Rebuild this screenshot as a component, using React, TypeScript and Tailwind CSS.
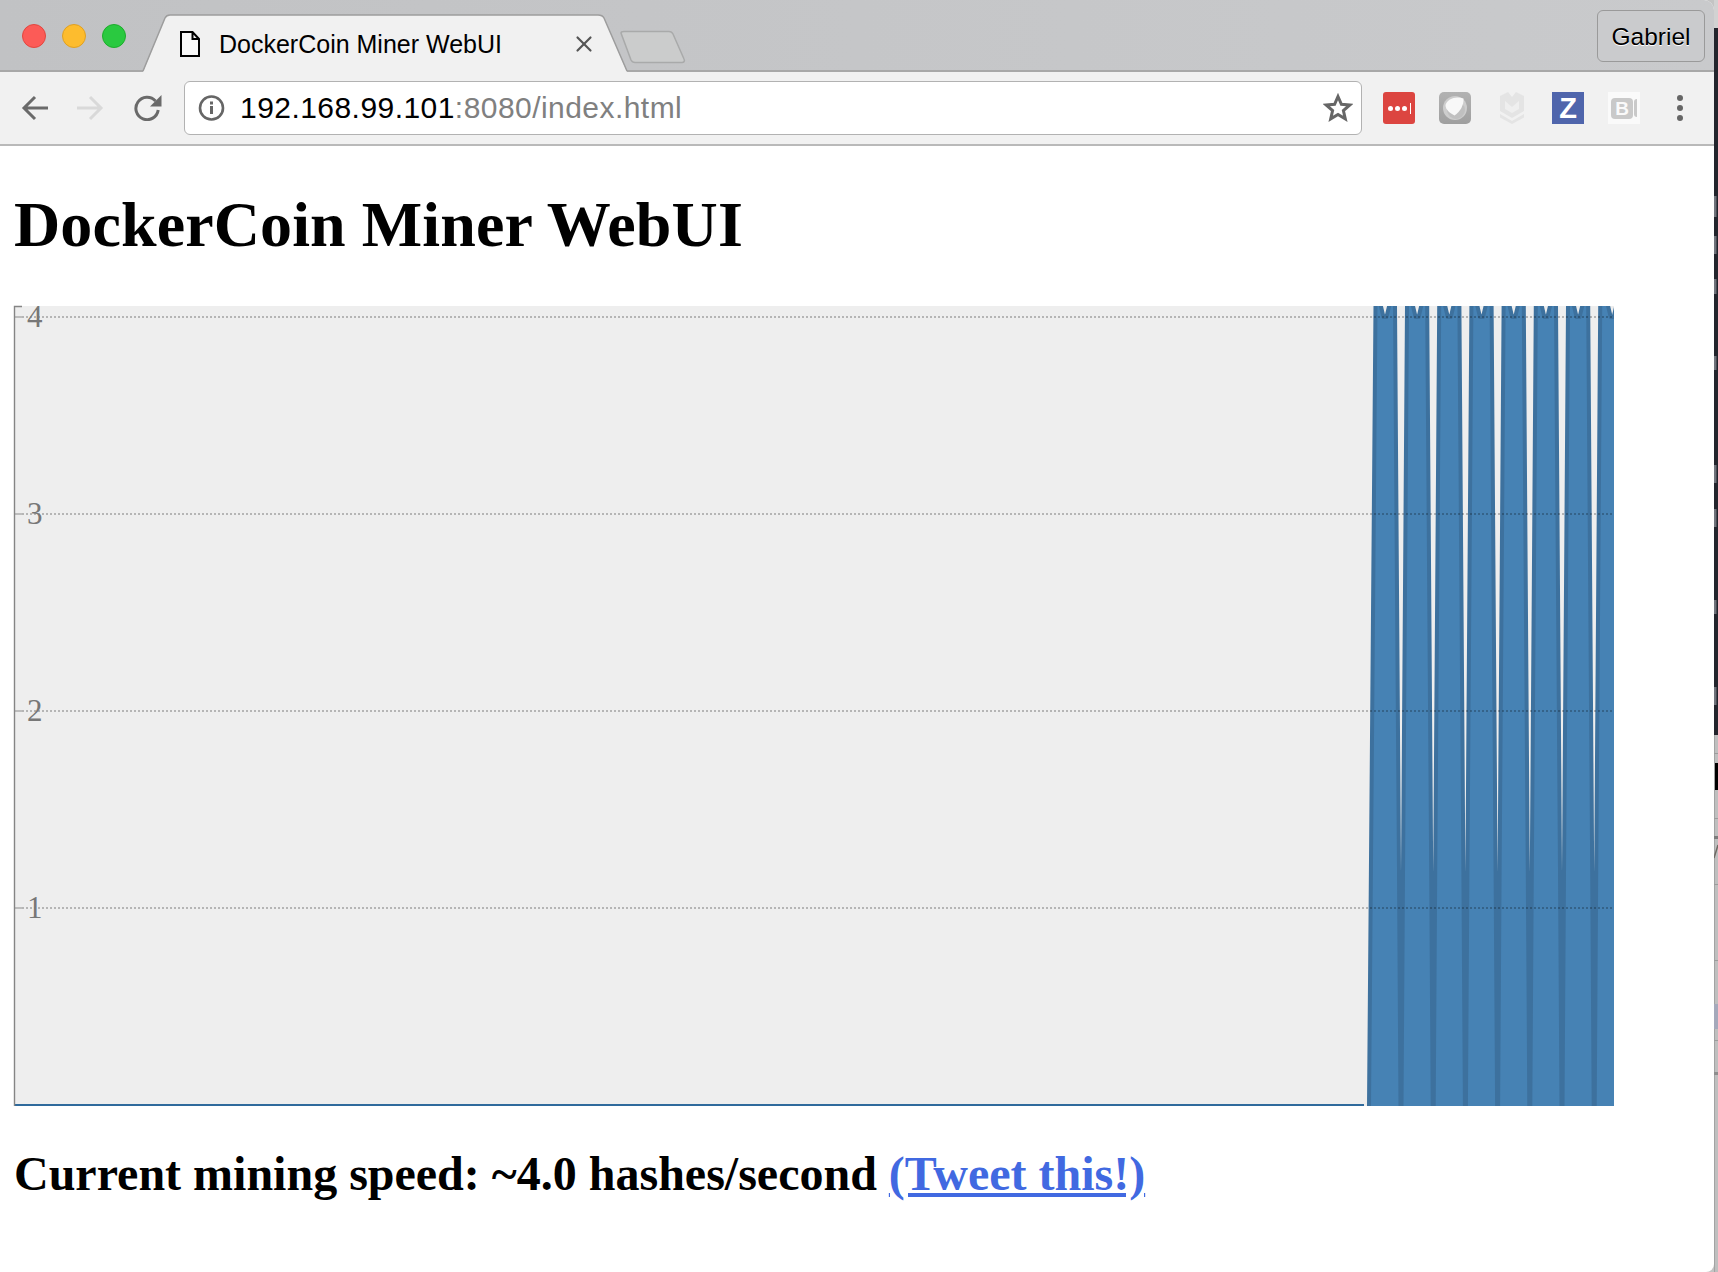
import React from 'react';
import { X } from 'lucide-react';

const SERIF = "font-['Liberation_Serif',serif]";

// valleys between the bursts, the chart is a rickshaw area clipped to its box
const VALLEYS = [0, 1, 2, 3, 4, 5, 6].map((i) => 1401 + 32.2 * i);

function areaPath() {
  const first = 1369;
  let d = `M${first} 1106 L${first + 6.5} 306 L${first + 6.6} 292`;
  const starts = [first, ...VALLEYS];
  starts.forEach((v, i) => {
    const c = v === first ? 1385 : i === VALLEYS.length ? v + 18 : v + 16.1;
    d += ` L${c - 6.5} 292 L${c - 6.5} 296 L${c - 1.5} 317 L${c + 1.5} 317 L${c + 6.5} 296 L${c + 6.5} 292`;
    if (i < VALLEYS.length) {
      const next = VALLEYS[i];
      d += ` L${next - 6} 292 L${next - 6} 306 L${next - 2} 872 L${next - 0.5} 1106 L${next + 0.5} 1106 L${next + 2} 872 L${next + 6} 306 L${next + 6} 292`;
    }
  });
  return d + ' L1640 292 L1640 1106';
}

function Chart() {
  const ticks = [
    { label: '4', y: 317 },
    { label: '3', y: 514 },
    { label: '2', y: 711 },
    { label: '1', y: 908 },
  ];
  const d = areaPath();
  return (
    <svg width="1600" height="800" viewBox="14 306 1600 800" className="block overflow-visible">
      <defs>
        <clipPath id="plot">
          <rect x="14" y="306" width="1600" height="800" />
        </clipPath>
      </defs>
      <rect x="14" y="306" width="1600" height="800" fill="#eeeeee" />
      <rect x="14" y="1104" width="1350" height="2" fill="#2f6a9c" />
      <g clipPath="url(#plot)">
        <path d={d + ' Z'} fill="#4682b4" />
        <path d={d} fill="none" stroke="#3d719e" strokeWidth="4" strokeLinejoin="round" />
      </g>
      {ticks.map((t) => (
        <g key={t.label}>
          <line x1="14" x2="1614" y1={t.y} y2={t.y} stroke="rgba(0,0,0,0.24)" strokeWidth="2" strokeDasharray="2 2" />
          <line x1="15" x2="22" y1={t.y} y2={t.y} stroke="#bdbdbd" strokeWidth="2" />
          <text x="27" y={t.y + 10} fontSize="31" fill="#777777" fontFamily="'Liberation Serif', serif">
            {t.label}
          </text>
        </g>
      ))}
      <path d="M22 306.5 H14.5 V1106" fill="none" stroke="#858585" strokeWidth="1.4" />
    </svg>
  );
}

function PageIcon() {
  return (
    <svg width="20" height="26" viewBox="0 0 20 26" className="shrink-0">
      <path d="M1 1 H12.5 L19 8 V25 H1 Z M12.5 1 V8 H19" fill="#f8f8f8" stroke="#000" strokeWidth="2" />
    </svg>
  );
}

function InfoIcon() {
  return (
    <svg width="27" height="26" viewBox="0 0 27 26" className="shrink-0">
      <circle cx="13.5" cy="13" r="11.500" fill="none" stroke="#666" strokeWidth="2.600" />
      <rect x="12" y="11" width="3" height="8" fill="#666" />
      <rect x="12" y="6.500" width="3" height="3" fill="#666" />
    </svg>
  );
}

function BackIcon({ color, flip }: { color: string; flip?: boolean }) {
  return (
    <svg width="27" height="26" viewBox="0 0 27 26" className={flip ? 'shrink-0 -scale-x-100' : 'shrink-0'}>
      <path d="M27 13 H3 M14 2 L3 13 L14 24" fill="none" stroke={color} strokeWidth="3" />
    </svg>
  );
}

function ReloadIcon() {
  return (
    <svg width="28" height="26" viewBox="0 0 28 26" className="shrink-0">
      <path d="M21.500 6 A 11.200 11.200 0 1 0 24.200 15" fill="none" stroke="#6a6a6a" strokeWidth="3" />
      <path d="M27.500 0 V11.500 H16 Z" fill="#6a6a6a" />
    </svg>
  );
}

function StarIcon() {
  return (
    <svg width="30" height="30" viewBox="0 0 30 30" className="shrink-0">
      <path
        d="M15 3.500 L18.400 11.300 L26.800 12 L20.400 17.600 L22.300 25.900 L15 21.500 L7.700 25.900 L9.600 17.600 L3.200 12 L11.600 11.300 Z"
        fill="none"
        stroke="#666"
        strokeWidth="3"
      />
    </svg>
  );
}

function LastPassIcon() {
  return (
    <div className="w-8 h-8 rounded-[3px] bg-[#dc4540] flex items-center justify-center gap-[2px] shrink-0">
      <span className="w-[5px] h-[5px] rounded-full bg-white" />
      <span className="w-[5px] h-[5px] rounded-full bg-white" />
      <span className="w-[5px] h-[5px] rounded-full bg-white" />
      <span className="w-[1px] h-[11px] bg-white ml-[1px]" />
    </div>
  );
}

function GhostIcon() {
  return (
    <svg width="32" height="32" viewBox="0 0 32 32" className="shrink-0">
      <defs>
        <linearGradient id="ghostbg" x1="0" y1="0" x2="0" y2="1">
          <stop offset="0" stopColor="#b2b2b2" />
          <stop offset="1" stopColor="#9f9f9f" />
        </linearGradient>
      </defs>
      <rect width="32" height="32" rx="5" fill="url(#ghostbg)" />
      <circle cx="16" cy="16" r="12" fill="#cdcdcd" />
      <circle cx="17" cy="18" r="9" fill="#a9a9a9" opacity="0.35" />
      <path d="M6.500 13 C8 7 17 3.500 24.500 6.500 C25 13 21 20 15.500 23.500 C11 21 6.500 18 6.500 13 Z" fill="#f8f8f8" />
    </svg>
  );
}

function ShieldIcon() {
  return (
    <svg width="24" height="32" viewBox="0 0 24 32" className="shrink-0">
      <path d="M0 4 L8 0 L12 5 L16 0 L24 4 V19 L12 26 L0 19 Z" fill="#e4e4e4" />
      <path d="M5 9 L12 15 L19 9 V17 L12 21 L5 17 Z" fill="#efefef" />
      <path d="M0 22 L12 29 L24 22 V25.500 L12 32 L0 25.500 Z" fill="#e4e4e4" />
    </svg>
  );
}

function ZIcon() {
  return (
    <div className="w-8 h-8 bg-[#4f65ac] flex items-center justify-center shrink-0">
      <span className="text-white font-bold text-[29px] leading-none font-['Liberation_Sans',sans-serif]">Z</span>
    </div>
  );
}

function CamIcon() {
  return (
    <div className="w-8 h-8 bg-[#fafafa] flex items-center pl-[3px] gap-[1px] shrink-0">
      <div className="w-[22px] h-[21px] rounded-[4px] bg-[#c9c9c9] flex items-center justify-center">
        <span className="text-[#fafafa] font-bold text-[19px] leading-none font-['Liberation_Sans',sans-serif]">B</span>
      </div>
      <div className="w-[3px] h-[18px] bg-[#c9c9c9] rounded-l-[3px]" />
    </div>
  );
}

function TabStrip() {
  return (
    <div className="relative h-[72px] rounded-tr-[10px] border-b-2 border-[#a8a8a8] bg-gradient-to-r from-[#c1c2c4] to-[#c9cacc] flex justify-end pt-[10px] pr-[9px]">
      <div className="absolute left-[22px] top-[24px] flex gap-[16px]">
        <span className="w-6 h-6 rounded-full bg-[#fc5b57] border border-[#e2463f]" />
        <span className="w-6 h-6 rounded-full bg-[#fdbc2e] border border-[#dfa023]" />
        <span className="w-6 h-6 rounded-full bg-[#2ac940] border border-[#1dad2b]" />
      </div>
      <svg width="488" height="58" viewBox="0 0 488 58" className="absolute left-[141px] top-[14px]">
        <path d="M2 58 L24 4 C25 2 26 1 29 1 L457 1 C460 1 462 2 463 4 L486 58 Z" fill="#f1f1f1" />
        <path d="M2 57 L24 4 C25 2 26 1 29 1 L457 1 C460 1 462 2 463 4 L486 57" fill="none" stroke="#9d9d9d" strokeWidth="1.500" />
      </svg>
      <div className="absolute left-[180px] top-[31px] w-[417px] h-[26px] flex items-center">
        <PageIcon />
        <span className="ml-[19px] text-[25px] leading-none text-black font-['Liberation_Sans',sans-serif]">DockerCoin Miner WebUI</span>
        <X size={26} strokeWidth={2} className="ml-auto text-[#555]" />
      </div>
      <svg width="68" height="34" viewBox="0 0 68 34" className="absolute left-[619px] top-[30px]">
        <path d="M2 3 C2 2 3 1.500 5 1.500 L50 1.500 C52 1.500 53 2 54 4 L65 29 C66 31 65 32.500 63 32.500 L16 32.500 C14 32.500 13 32 12 30 Z" fill="#cbcccc" stroke="#a9aaaa" strokeWidth="1.500" />
      </svg>
      <div className="w-[108px] h-[52px] pt-[3px] rounded-[6px] border border-[#9a9a9a] bg-[#cacbcd] flex items-center justify-center text-[24.500px] text-black [text-shadow:0_1px_0_#ffffff] font-['Liberation_Sans',sans-serif]">
        Gabriel
      </div>
    </div>
  );
}

function Toolbar() {
  return (
    <div className="h-[74px] border-b-2 border-[#b9b9b9] bg-[#f1f1f1] flex items-center pl-[21px]">
      <BackIcon color="#6a6a6a" />
      <div className="ml-[29px]"><BackIcon color="#d9d9d9" flip /></div>
      <div className="ml-[30px]"><ReloadIcon /></div>
      <div className="ml-[22px] w-[1178px] h-[54px] rounded-[6px] border border-[#b2b2b2] bg-white flex items-center pl-[13px] pr-[8px] shrink-0">
        <InfoIcon />
        <span className="ml-[15px] text-[30px] leading-none tracking-[0.45px] text-black font-['Liberation_Sans',sans-serif]">
          192.168.99.101<span className="text-[#808080]">:8080/index.html</span>
        </span>
        <div className="ml-auto"><StarIcon /></div>
      </div>
      <div className="ml-[21px] flex items-center">
        <LastPassIcon />
        <div className="ml-[24px]"><GhostIcon /></div>
        <div className="ml-[29px]"><ShieldIcon /></div>
        <div className="ml-[28px]"><ZIcon /></div>
        <div className="ml-[24px]"><CamIcon /></div>
      </div>
      <div className="ml-[37px] flex flex-col gap-[4px]">
        <span className="w-[6px] h-[6px] rounded-full bg-[#666]" />
        <span className="w-[6px] h-[6px] rounded-full bg-[#666]" />
        <span className="w-[6px] h-[6px] rounded-full bg-[#666]" />
      </div>
    </div>
  );
}

// the sliver of desktop that shows to the right of the browser window
function DesktopSliver() {
  const letters = [[196, 21], [236, 18], [279, 15], [356, 14], [465, 18], [509, 18], [600, 14], [687, 18]];
  const rules = [753, 818, 884, 960, 1040];
  return (
    <svg width="4" height="1272" viewBox="0 0 4 1272" className="shrink-0 block">
      <rect width="4" height="28" fill="#d2d2d2" />
      <rect y="28" width="4" height="707" fill="#23252d" />
      <rect y="735" width="4" height="537" fill="#bfbfbf" />
      <rect y="735" width="1" height="537" fill="#a3a3a3" />
      {letters.map(([y, h]) => (
        <rect key={y} x="0" y={y} width="2.500" height={h} fill="#6f727a" />
      ))}
      {rules.map((y) => (
        <rect key={y} y={y} width="4" height="1" fill="#9c9c9c" />
      ))}
      <rect x="1" y="763" width="3" height="27" fill="#000000" />
      <rect y="836" width="4" height="3" fill="#7c7c7c" />
      <rect y="1004" width="4" height="25" fill="#a5a9bb" />
      <rect y="1072" width="4" height="3" fill="#8e8e8e" />
      <path d="M0 858 L4 845" stroke="#6f6a64" strokeWidth="1.500" />
    </svg>
  );
}

export default function App() {
  return (
    <div className="w-[1718px] h-[1272px] overflow-hidden flex bg-[#c4c4c4]">
      <div className="w-[1714px] h-full bg-white flex flex-col rounded-tr-[10px] rounded-br-[8px]">
        <TabStrip />
        <Toolbar />
        <main className={`px-[14px] text-black ${SERIF}`}>
          <h1 className="text-[64px] font-bold leading-[74px] tracking-[0.11px] mt-[42px] mb-[44px]">DockerCoin Miner WebUI</h1>
          <Chart />
          <h2 className="text-[48px] font-bold leading-[55px] mt-[40px]">
            Current mining speed: ~4.0 hashes/second{' '}
            <a href="#" className="text-[#4169e1] underline">(Tweet this!)</a>
          </h2>
        </main>
      </div>
      <DesktopSliver />
    </div>
  );
}
